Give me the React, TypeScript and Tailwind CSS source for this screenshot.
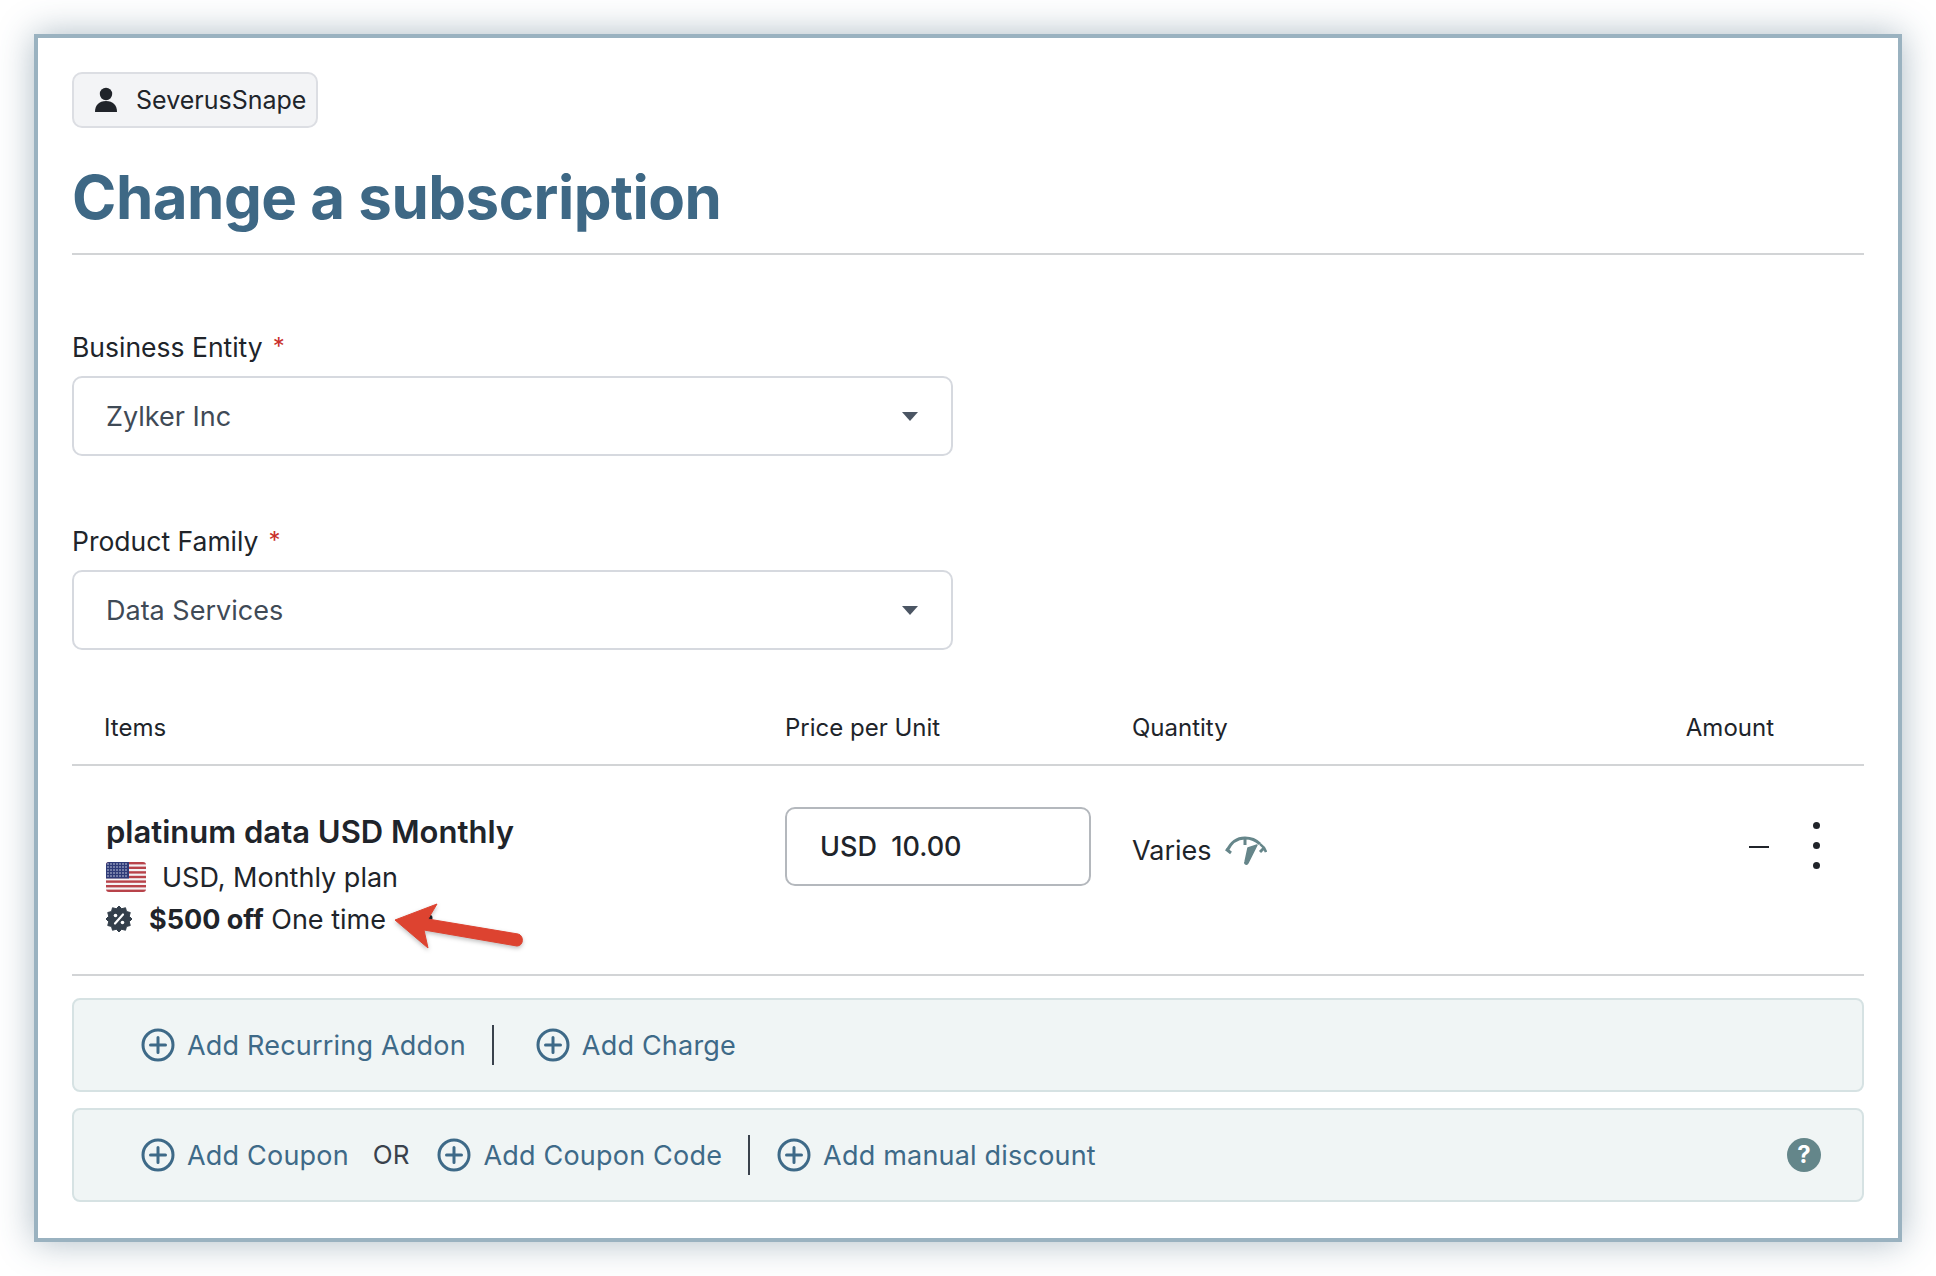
import React from "react";

const PlusCircle = () => (
  <svg width="34" height="34" viewBox="0 0 34 34" fill="none" className="shrink-0">
    <circle cx="17" cy="17" r="15" stroke="#3e6a88" strokeWidth="3" />
    <path d="M17 9.5v15M9.5 17h15" stroke="#3e6a88" strokeWidth="3" strokeLinecap="round" />
  </svg>
);

const Caret = () => (
  <svg width="16" height="9" viewBox="0 0 16 9" className="shrink-0">
    <path d="M0 0h16L8 9z" fill="#4b5563" />
  </svg>
);

const Person = () => (
  <svg width="24" height="26" viewBox="0 0 24 26" className="shrink-0">
    <circle cx="12" cy="7" r="6.2" fill="#20242a" />
    <path d="M1 25c0-7 4-11 11-11s11 4 11 11z" fill="#20242a" />
  </svg>
);

const Flag = () => (
  <svg width="40" height="30" viewBox="0 0 40 30" className="shrink-0">
    <defs>
      <clipPath id="fc"><rect width="40" height="30" rx="3" /></clipPath>
    </defs>
    <g clipPath="url(#fc)">
      <rect width="40" height="30" fill="#f4f4f6" />
      {[0, 4.6, 9.2, 13.8, 18.4, 23, 27.6].map((y) => (
        <rect key={y} y={y} width="40" height="2.4" fill="#b8434a" />
      ))}
      <rect width="23" height="16.5" fill="#2f3b78" />
      {[2, 5, 8, 11, 14].map((y) =>
        [2, 5, 8, 11, 14, 17, 20].map((x) => (
          <circle key={`${x}-${y}`} cx={x} cy={y} r="0.8" fill="#cfd3e6" />
        ))
      )}
    </g>
  </svg>
);

const Badge = () => {
  const pts: string[] = [];
  for (let i = 0; i < 24; i++) {
    const r = i % 2 === 0 ? 13 : 10.6;
    const a = (i * Math.PI) / 12;
    pts.push(`${13 + r * Math.sin(a)},${13 - r * Math.cos(a)}`);
  }
  return (
    <svg width="26" height="26" viewBox="0 0 26 26" className="shrink-0">
      <polygon points={pts.join(" ")} fill="#343f4b" stroke="#343f4b" strokeLinejoin="round" />
      <path d="M17 8.5 9 17.5" stroke="#fff" strokeWidth="2.2" strokeLinecap="round" />
      <circle cx="9.5" cy="9.5" r="1.8" fill="#fff" />
      <circle cx="16.5" cy="16.5" r="1.8" fill="#fff" />
    </svg>
  );
};

const Gauge = () => (
  <svg width="43" height="29" viewBox="0 0 43 29" fill="none" className="shrink-0">
    <path d="M3 15C7 6 14 2 21 2s11 2 15 6" stroke="#66868a" strokeWidth="3" />
    <path d="M36 8c3 2 5 5 6 8" stroke="#66868a" strokeWidth="2.5" />
    <path d="M2 13l5 4M21 2v7M40 12l-4 4" stroke="#66868a" strokeWidth="3" />
    <path d="M33 9 24 27c-1 2-4 1-3-1l3-14z" fill="#66868a" stroke="#66868a" strokeWidth="1.5" strokeLinejoin="round" />
  </svg>
);

const Arrow = () => (
  <svg width="140" height="60" viewBox="0 0 140 60" className="absolute left-[390px] top-[900px] overflow-visible">
    <circle cx="39" cy="18" r="3.5" fill="#20242a" />
    <path
      d="M5 20 47 4 38 19 128 34c6 1 6 12-1 12L34 30 38 48z"
      fill="#dd4330"
      stroke="#dd4330"
      strokeWidth="1"
      strokeLinejoin="round"
      style={{ filter: "drop-shadow(0 2px 2px rgba(0,0,0,.25))" }}
    />
  </svg>
);

const Action = ({ label, className = "" }: { label: string; className?: string }) => (
  <div className={`flex items-center gap-[12px] ${className}`}>
    <PlusCircle />
    <span className="text-[#3e6a88] text-[27px] leading-none tracking-[0.2px]">{label}</span>
  </div>
);

const Field = ({ label, value, className = "" }: { label: string; value: string; className?: string }) => (
  <div className={className}>
    <div className="h-[32px] flex items-center text-[#20242a] text-[26.5px] leading-none">
      {label}
      <span className="text-[#c9302c] ml-[10px] text-[24px]">*</span>
    </div>
    <div className="mt-[13px] w-[881px] h-[80px] border-2 border-[#d6d9df] rounded-[10px] pl-[32px] pr-[33px] flex items-center justify-between">
      <span className="text-[#3f4a56] text-[27px] leading-none">{value}</span>
      <Caret />
    </div>
  </div>
);

export default function App() {
  return (
    <div
      className="relative w-[1936px] h-[1276px] bg-white pt-[34px] pl-[34px] overflow-hidden"
      style={{ fontFamily: "Inter, 'Liberation Sans', sans-serif" }}
    >
      <div className="w-[1868px] h-[1208px] border-4 border-[#9ab2c0] bg-white pt-[34px] px-[34px] shadow-[0_0_34px_rgba(50,85,110,0.4)]">
        <div className="w-[246px] h-[56px] bg-[#f3f4f6] border-2 border-[#dcdee3] rounded-[10px] flex items-center pl-[20px] gap-[18px]">
          <Person />
          <span className="text-[#20242a] text-[25px] leading-none">SeverusSnape</span>
        </div>

        <h1 className="mt-[34px] h-[91px] border-b-2 border-[#d2d4d6] text-[#3e6885] text-[60px] font-bold leading-[70px] tracking-[-0.5px] box-content w-full pb-0">
          Change a subscription
        </h1>

        <Field label="Business Entity" value="Zylker Inc" className="mt-[76px]" />
        <Field label="Product Family" value="Data Services" className="mt-[69px]" />

        <div className="mt-[60px] h-[56px] border-b-2 border-[#d2d4d6] flex items-start text-[24px] leading-[36px] text-[#20242a]">
          <div className="w-[713px] pl-[32px]">Items</div>
          <div className="w-[347px]">Price per Unit</div>
          <div className="flex-1">Quantity</div>
          <div className="pr-[90px]">Amount</div>
        </div>

        <div className="h-[210px] border-b-2 border-[#d2d4d6] flex items-start text-[#20242a]">
          <div className="w-[713px] pl-[34px] pt-[45px]">
            <div className="h-[40px] flex items-center text-[31px] font-semibold leading-none">platinum data USD Monthly</div>
            <div className="mt-[6px] h-[40px] flex items-center gap-[16px] text-[27px] leading-none">
              <Flag />
              <span>USD, Monthly plan</span>
            </div>
            <div className="mt-[2px] h-[40px] flex items-center gap-[17px] text-[27px] leading-none">
              <Badge />
              <span><b className="font-bold">$500 off</b> One time</span>
            </div>
          </div>
          <div className="w-[347px] pt-[41px]">
            <div className="w-[306px] h-[79px] border-2 border-[#b4b8bd] rounded-[10px] pl-[33px] flex items-center text-[27px] font-medium leading-none whitespace-pre">
              USD  10.00
            </div>
          </div>
          <div className="flex-1 pt-[59px] flex items-center gap-[12px] text-[27px] leading-none h-[110px]">
            <span>Varies</span>
            <Gauge />
          </div>
          <div className="pt-[80px] w-[20px] mr-[44px]">
            <div className="h-[2px] w-[20px] bg-[#20242a]" />
          </div>
          <div className="pt-[56px] mr-[44px] flex flex-col gap-[13px]">
            <div className="w-[7px] h-[7px] rounded-full bg-[#20242a]" />
            <div className="w-[7px] h-[7px] rounded-full bg-[#20242a]" />
            <div className="w-[7px] h-[7px] rounded-full bg-[#20242a]" />
          </div>
        </div>

        <div className="mt-[22px] h-[94px] bg-[#f0f5f5] border-2 border-[#d6e2e3] rounded-[8px] pl-[67px] flex items-center">
          <Action label="Add Recurring Addon" />
          <div className="w-[2px] h-[40px] bg-[#3a424c] ml-[26px]" />
          <Action label="Add Charge" className="ml-[42px]" />
        </div>

        <div className="mt-[16px] h-[94px] bg-[#f0f5f5] border-2 border-[#d6e2e3] rounded-[8px] pl-[67px] pr-[41px] flex items-center">
          <Action label="Add Coupon" />
          <span className="ml-[24px] text-[#3a424c] text-[26px] leading-none">OR</span>
          <Action label="Add Coupon Code" className="ml-[28px]" />
          <div className="w-[2px] h-[40px] bg-[#3a424c] ml-[26px]" />
          <Action label="Add manual discount" className="ml-[27px]" />
          <div className="ml-auto w-[34px] h-[34px] rounded-full bg-[#64868a] flex items-center justify-center text-white text-[24px] font-bold leading-none">
            ?
          </div>
        </div>
      </div>
      <Arrow />
    </div>
  );
}
